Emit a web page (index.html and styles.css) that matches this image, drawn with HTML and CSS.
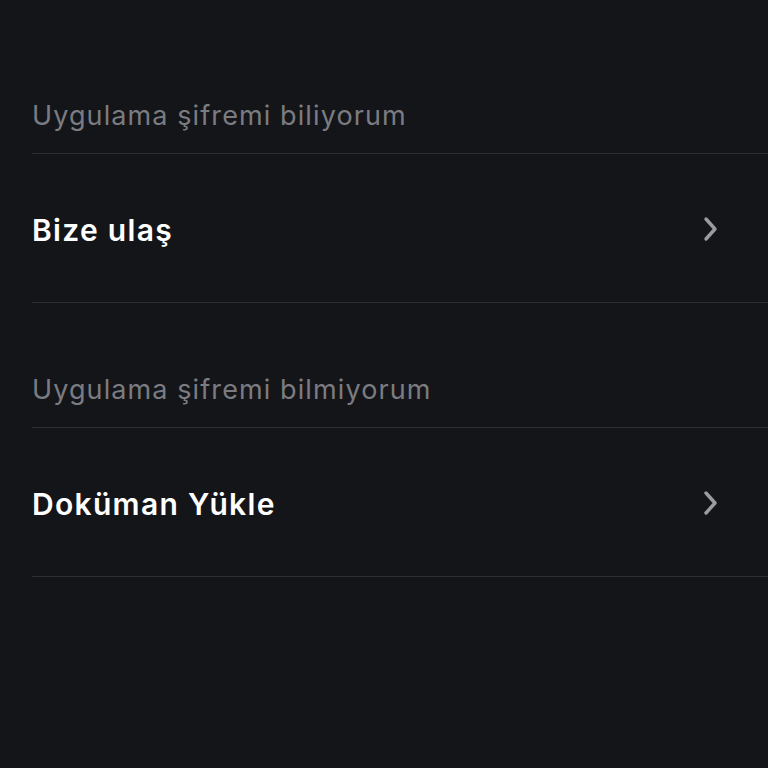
FILE: index.html
```html
<!DOCTYPE html>
<html>
<head>
  <title>Giriş yardımı</title>
  <link rel="stylesheet" href="styles.css">
</head>
<body>
  <div class="help-list">
    <div class="help-section">
      <div class="section-title">Uygulama şifremi biliyorum</div>
      <a class="help-row" href="#">
        <span class="row-label">Bize ulaş</span>
        <svg class="chevron" width="18" height="28" viewBox="0 0 18 28">
          <path d="M4 4 L13 14 L4 24" fill="none" stroke="currentColor" stroke-width="3.4" stroke-linecap="round" stroke-linejoin="round"/>
        </svg>
      </a>
    </div>

    <div class="help-section">
      <div class="section-title">Uygulama şifremi bilmiyorum</div>
      <a class="help-row" href="#">
        <span class="row-label">Doküman Yükle</span>
        <svg class="chevron" width="18" height="28" viewBox="0 0 18 28">
          <path d="M4 4 L13 14 L4 24" fill="none" stroke="currentColor" stroke-width="3.4" stroke-linecap="round" stroke-linejoin="round"/>
        </svg>
      </a>
    </div>
  </div>
</body>
</html>
```

FILE: styles.css
```css
:root {
  --bg: #141519;
  --divider: #2e2f33;
  --muted: #7b7c81;
  --text: #ffffff;
  --chevron: #9b9ca0;
}

body {
  margin: 0;
  padding: 0;
  min-height: 100vh;
  background: var(--bg);
  font-family: Inter, "Noto Sans", sans-serif;
  color: var(--text);
}

.help-list {
  padding-top: 29px;
  padding-left: 32px;
}

.section-title {
  height: 125px;
  display: flex;
  align-items: flex-end;
  box-sizing: border-box;
  padding-bottom: 22px;
  font-size: 27px;
  line-height: 30px;
  letter-spacing: 1.1px;
  color: var(--muted);
  border-bottom: 1px solid var(--divider);
}

.help-row {
  height: 148px;
  display: flex;
  align-items: center;
  justify-content: space-between;
  padding-right: 48px;
  border-bottom: 1px solid var(--divider);
  text-decoration: none;
  color: var(--text);
}

.row-label {
  font-size: 30px;
  font-weight: 600;
  letter-spacing: 1.3px;
  padding-top: 4px;
}

.chevron {
  color: var(--chevron);
  margin-top: 2px;
}
```
